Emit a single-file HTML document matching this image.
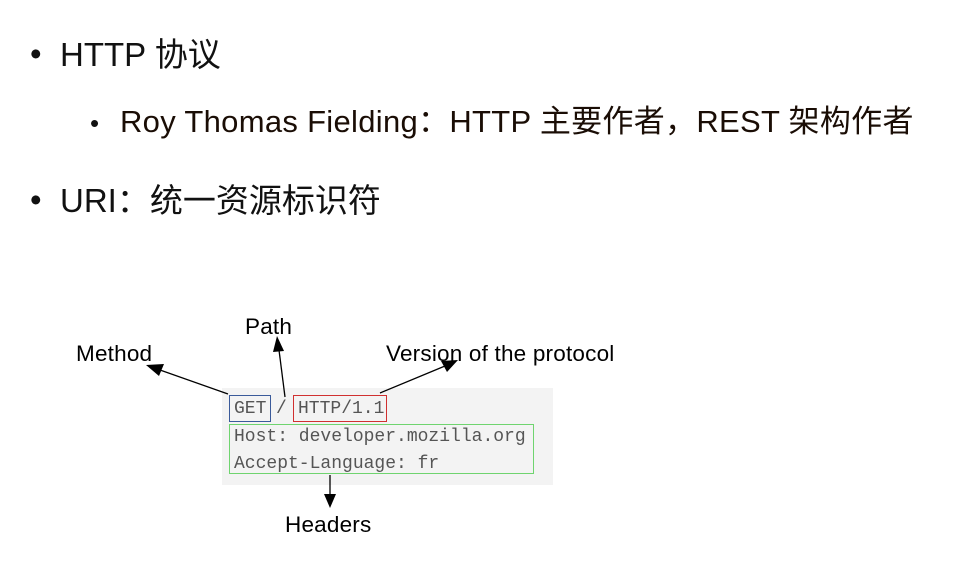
<!DOCTYPE html>
<html><head><meta charset="utf-8"><style>
body{margin:0;width:956px;height:571px;background:#fff;position:relative;overflow:hidden;font-family:"Liberation Sans","Noto Sans CJK SC",sans-serif;}
.t{position:absolute;white-space:nowrap;color:#111;line-height:1;}
.mono{font-family:"Liberation Mono",monospace;color:#555;font-size:18px;position:absolute;white-space:nowrap;line-height:1;}
.lab{position:absolute;font-size:22.5px;color:#000;white-space:nowrap;line-height:1;letter-spacing:0.2px;}
</style></head><body>
<div class="t" style="left:30px;top:37px;font-size:33px;">•</div>
<div class="t" style="left:60px;top:38px;font-size:33px;">HTTP 协议</div>
<div class="t" style="left:90px;top:110px;font-size:26px;">•</div>
<div class="t" style="left:120px;top:106px;font-size:31px;color:#1a0d05;letter-spacing:0.3px;">Roy Thomas Fielding：HTTP 主要作者，REST 架构作者</div>
<div class="t" style="left:30px;top:183px;font-size:33px;">•</div>
<div class="t" style="left:60px;top:184px;font-size:33px;">URI：统一资源标识符</div>

<div style="position:absolute;left:222px;top:388px;width:331px;height:97px;background:#f3f3f3;"></div>
<div style="position:absolute;left:229px;top:395px;width:42px;height:27px;border:1px solid #3a5a9a;box-sizing:border-box;"></div>
<div style="position:absolute;left:293px;top:395px;width:94px;height:27px;border:1px solid #d03030;box-sizing:border-box;"></div>
<div style="position:absolute;left:229px;top:424px;width:305px;height:50px;border:1px solid #6fd46f;box-sizing:border-box;"></div>
<div class="mono" style="left:234px;top:400px;">GET</div>
<div class="mono" style="left:276px;top:400px;">/</div>
<div class="mono" style="left:298px;top:400px;">HTTP/1.1</div>
<div class="mono" style="left:234px;top:428px;">Host: developer.mozilla.org</div>
<div class="mono" style="left:234px;top:455px;">Accept-Language: fr</div>

<div class="lab" style="left:76px;top:343px;">Method</div>
<div class="lab" style="left:245px;top:316px;">Path</div>
<div class="lab" style="left:386px;top:343px;">Version of the protocol</div>
<div class="lab" style="left:285px;top:514px;">Headers</div>

<svg width="956" height="571" style="position:absolute;left:0;top:0" xmlns="http://www.w3.org/2000/svg">
<g stroke="#000" stroke-width="1.3" fill="none">
<line x1="228" y1="394" x2="160" y2="370"/>
<line x1="285" y1="397" x2="279" y2="350"/>
<line x1="380" y1="393" x2="445" y2="366"/>
<line x1="330" y1="475" x2="330" y2="500"/>
</g>
<g fill="#000">
<polygon points="146,365 164,364 159,376"/>
<polygon points="277,336 273,352 284,351"/>
<polygon points="458,360 441,361 447,372"/>
<polygon points="330,508 324,494 336,494"/>
</g>
</svg>
</body></html>
